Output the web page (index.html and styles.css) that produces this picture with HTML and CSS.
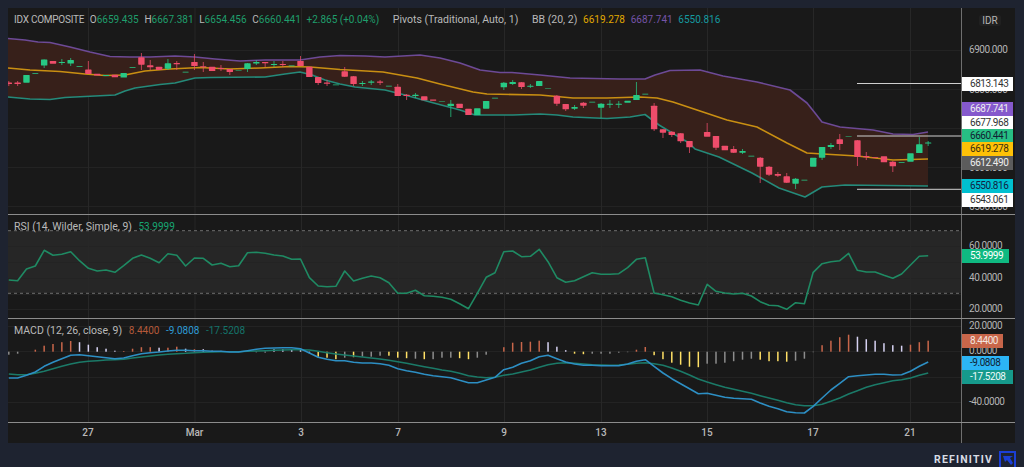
FILE: index.html
```html
<!DOCTYPE html>
<html lang="en">
<head>
    <meta charset="UTF-8">
    <meta name="viewport" content="width=device-width, initial-scale=1.0">
    <title>IDX Composite</title>
    <link rel="stylesheet" href="styles.css">
</head>
<body>
    <div class="chart">
        <!-- Price pane -->
        <div class="pane pane-price">
            <div class="plot">
                <svg id="pricePlot" viewBox="8 8 953 206" width="953" height="206"></svg>
                <div class="legend legend-price">
                    <span class="symbol">IDX COMPOSITE</span>
                    <span>O<b class="up">6659.435</b></span>
                    <span>H<b class="up">6667.381</b></span>
                    <span>L<b class="up">6654.456</b></span>
                    <span>C<b class="up">6660.441</b></span>
                    <span class="up">+2.865 (+0.04%)</span>
                    <span class="study name">Pivots (Traditional, Auto, 1)</span>
                    <span class="study name">BB (20, 2)</span>
                    <span class="bb-mid">6619.278</span>
                    <span class="bb-top">6687.741</span>
                    <span class="bb-low">6550.816</span>
                </div>
            </div>
            <div class="axis">
                <div class="currency">IDR</div>
                <span class="scale" style="top:41.5px">6900.000</span>
                <span class="scale" style="top:81.5px">6800.000</span>
                <span class="scale" style="top:159.5px">6600.000</span>
                <span class="scale" style="top:198.5px">6500.000</span>
                <span class="tag tag-white" style="top:75.5px">6813.143</span>
                <span class="tag tag-purple" style="top:100.7px">6687.741</span>
                <span class="tag tag-white" style="top:114.5px">6677.968</span>
                <span class="tag tag-green" style="top:128px">6660.441</span>
                <span class="tag tag-yellow" style="top:141.3px">6619.278</span>
                <span class="tag tag-grey" style="top:154.7px">6612.490</span>
                <span class="tag tag-cyan" style="top:178px">6550.816</span>
                <span class="tag tag-white" style="top:192px">6543.061</span>
            </div>
        </div>

        <!-- RSI pane -->
        <div class="pane pane-study">
            <div class="plot">
                <svg id="rsiPlot" viewBox="8 215 953 103" width="953" height="103"></svg>
                <div class="legend">
                    <span class="name">RSI (14, Wilder, Simple, 9)</span>
                    <span class="rsi-value">53.9999</span>
                </div>
            </div>
            <div class="axis">
                <span class="scale" style="top:31px">60.0000</span>
                <span class="scale" style="top:62.7px">40.0000</span>
                <span class="scale" style="top:94.3px">20.0000</span>
                <span class="tag tag-short tag-rsi" style="top:40.5px">53.9999</span>
            </div>
        </div>

        <!-- MACD pane -->
        <div class="pane pane-study">
            <div class="plot">
                <svg id="macdPlot" viewBox="8 319 953 103" width="953" height="103"></svg>
                <div class="legend">
                    <span class="name">MACD (12, 26, close, 9)</span>
                    <span class="macd-hist">8.4400</span>
                    <span class="macd-line">-9.0808</span>
                    <span class="macd-signal">-17.5208</span>
                </div>
            </div>
            <div class="axis">
                <span class="scale" style="top:7.3px">20.0000</span>
                <span class="scale" style="top:32.3px">0.0000</span>
                <span class="scale" style="top:83px">-40.0000</span>
                <span class="tag tag-hist" style="top:22px">8.4400</span>
                <span class="tag tag-short tag-macd" style="top:43.7px">-9.0808</span>
                <span class="tag tag-signal" style="top:57.5px">-17.5208</span>
            </div>
        </div>

        <!-- Time axis -->
        <div class="time-row">
            <div class="times">
                <span style="left:80px">27</span>
                <span style="left:186.5px">Mar</span>
                <span style="left:293px">3</span>
                <span style="left:390px">7</span>
                <span style="left:496px">9</span>
                <span style="left:593px">13</span>
                <span style="left:699px">15</span>
                <span style="left:805px">17</span>
                <span style="left:902px">21</span>
            </div>
            <div class="axis"></div>
        </div>
    </div>

    <div class="footer">
        <span class="brand">REFINITIV</span>
        <svg class="brand-logo" viewBox="0 0 17 16" width="17" height="16">
            <path d="M1 16V1h15v15" fill="none" stroke="#1b3fd6" stroke-width="2"/>
            <path d="M4 5h10L11 7l3 5-2 2-4-5-2 2z" fill="#1b3fd6"/>
        </svg>
    </div>

    <script src="chart.js"></script>
</body>
</html>
```

FILE: styles.css
```css
* {
    box-sizing: border-box;
}
body {
    margin: 0;
    padding: 8px 8px 0 8px;
    height: 467px;
    overflow: hidden;
    background: #1e2330;
    font-family: Roboto, "Liberation Sans", sans-serif;
    font-size: 10px;
}
.chart {
    width: 1007px;
    height: 435px;
    background: #191919;
}
.pane {
    display: flex;
    border-bottom: 1px solid #8c8c8c;
}
.pane-price {
    height: 207px;
}
.pane-study {
    height: 104px;
}
.plot {
    position: relative;
    width: 953px;
    flex: none;
}
.plot svg {
    display: block;
    filter: blur(0.35px);
}
.axis {
    position: relative;
    flex: 1;
    border-left: 1px solid #6f6f6f;
    color: #b4b4b4;
}
.legend {
    position: absolute;
    left: 6px;
    top: 6px;
    display: flex;
    gap: 6.5px;
    line-height: 12px;
    color: #b9b9b9;
    white-space: nowrap;
}
.legend-price {
    gap: 5.7px;
}
.legend b {
    font-weight: normal;
}
.symbol {
    letter-spacing: -0.25px;
}
.name {
    font-size: 10.5px;
}
.study {
    margin-left: 8px;
}
.up {
    color: #1f9e6c;
}
.bb-mid {
    color: #e0a800;
}
.bb-top {
    color: #7554a8;
}
.bb-low {
    color: #159aa0;
}
.rsi-value {
    color: #17a673;
}
.macd-hist {
    color: #b5593a;
}
.macd-line {
    color: #2e9bd6;
}
.macd-signal {
    color: #14746a;
}
.currency {
    width: 22px;
    margin: 7px 0 0 17px;
    line-height: 11px;
    text-align: center;
    background: #202020;
    border-radius: 2px;
}
.scale {
    position: absolute;
    left: 7px;
    line-height: 12px;
    letter-spacing: -0.45px;
    transform: translateY(-50%);
}
.tag {
    position: absolute;
    left: 0;
    width: 51px;
    height: 14px;
    padding-left: 8px;
    line-height: 14px;
    letter-spacing: -0.45px;
    transform: translateY(-50%);
}
.tag-short {
    width: 47px;
}
.tag-white {
    background: #fff;
    color: #333;
}
.tag-purple {
    background: #8559cc;
    color: #eee;
}
.tag-green {
    background: #27bf84;
    color: #123;
}
.tag-yellow {
    background: #ffc107;
    color: #3a2f10;
}
.tag-grey {
    background: #5c5c5c;
    color: #eee;
}
.tag-cyan {
    background: #00c0d0;
    color: #124;
}
.tag-rsi {
    background: #0fb981;
    color: #fff;
}
.tag-hist {
    width: 41px;
    background: #c8664a;
    color: #f3e6e0;
}
.tag-macd {
    background: #2cb5f5;
    color: #123;
}
.tag-signal {
    background: #169a8c;
    color: #eafafa;
}
.time-row {
    display: flex;
    height: 20px;
}
.times {
    position: relative;
    width: 953px;
    flex: none;
    color: #b9b9b9;
    font-weight: 500;
    line-height: 20px;
}
.times span {
    position: absolute;
    transform: translateX(-50%);
}
.footer {
    display: flex;
    justify-content: flex-end;
    align-items: flex-end;
    gap: 6px;
    height: 24px;
}
.brand {
    margin-bottom: 1px;
    color: #d8dce4;
    font-size: 10.5px;
    font-weight: 700;
    letter-spacing: 1.2px;
    line-height: 12px;
}
.brand-logo {
    display: block;
}
```

FILE: chart.js
```js
// x of bar i on the plot, all y values below are page pixels
const barX = i => 8.8 + 8.84 * i;
const ticks = [88, 194.5, 301, 398, 504, 601, 707, 813, 910];

const GREEN = '#27c985';
const RED = '#ef4d6b';

// dir, body top, body bottom, wick top, wick bottom (null = no bar)
const candles = [
    ['r',82.5,84,81,86],['r',82.5,84,81,86],['g',75,82.7],['g',73.2,74],['g',59.5,65.5,59.5,68],
    ['r',61,63.7],['g',62,63,59,65],['g',60,63.5,58,66],['g',66.3,67],['r',69.5,74,61,74],
    ['r',73.7,75.5],['g',75,76],['r',74.7,77.3],['g',73,77.5],['g',67.2,68],
    ['r',57.3,64.7,53,70],['r',65.3,67.3,60,70],['r',66.7,70],['g',63.3,68.7,59,70],['r',63,64.3,61,70],
    ['g',71.7,72.4],['r',62,66,54,70],['r',66.3,67.3,62,72],['r',66.7,71],['r',68,69,65,71],
    ['r',69,72,69,75],['g',70.4,71.1],['g',63.3,69,63,72],['g',62,63.5,60,65],['r',62,63.3,62,67],
    ['g',64,65,61,67],['r',64,65,61,67],['g',65.6,66.3],['r',61,66,56,66],['r',66.7,77],
    ['r',77,83,77,85],['r',82.5,83.8,80,86],['g',84.6,85.3],['r',71.3,76.7,67,77],['r',76.3,84,76,86],
    ['g',83,84,81,86],['g',81.5,82.7,80,85],['r',81.5,82.7,80,85],['g',85.7,86.4],['r',86.7,96,84,96],
    ['r',94.7,96,94,100],['g',94.7,96,93,98],['r',96.3,100.3],['r',99.5,100.7],['g',101.4,102.1],
    ['g',103.7,106,100,117],['r',103.7,108],['r',108.7,115],['g',108.3,115],['g',101,108.7],
    ['g',97.7,98.4],['g',82.7,87.3,82,90],['g',82,84,80,85],['r',82.3,87,82,89],['g',85.7,86.7,84,88],
    ['g',81,86],['g',88.4,89.1],['r',95.7,103.7,95,106],['r',104,109.3,104,111],['g',107,108.7,105,110],
    ['r',102.7,105.7,102,108],['g',101.7,102.4],['g',103.7,107.7,103,118],['g',103.7,104.7,100,108],['g',103.7,104.7,101,108],
    ['g',100.7,102.7],['g',95,100,82,100],['g',93.7,94.4],['r',105.7,129.3,103,131],['r',129.3,132.7,129,138],
    ['r',131.7,135,131,137],['r',133.3,141.3,133,143],['r',141,147.3,141,153],null,['r',132,136.7,123,136],
    ['r',136,147.7,136,150],['r',145.7,150.3],['r',149,152.7,146,153],['g',151,152.7,149,154],['g',155.7,156.4],
    ['r',157.7,166.7,157,183],['r',166.7,174.7,166,176],['r',174,175.7,172,177],['r',176.3,182.7,173,183],['g',178.7,183.7,178,189],
    ['g',179.7,180.4],['g',157.7,166.7],['g',147,157.7,147,160],['g',145,147,143,149],['r',139.3,144,134,150],
    ['g',136.4,137.1],['r',140.3,157,140,166],['r',156,157.3,152,160],['r',157.2,157.9],['r',156.3,162.3],
    ['r',161.7,166.3,161,172],['g',162,162.7],['g',153.3,161.7],['g',144.3,153,137,153],['g',142.5,143.5,141,146]
];

const bbTop = [[8,38.5],[25,40],[38,42],[50,42.5],[70,47],[90,52],[110,56.5],[130,57],[150,57],[175,56],[195,57],[215,59],[240,61],[265,60],[300,60],[320,57],[340,55.5],[365,56],[385,57],[420,55],[440,58],[460,63],[480,70],[500,72.5],[512,72.5],[540,75],[570,78],[620,79],[645,79],[655,75],[670,70.5],[700,70],[723,76],[757,82],[790,90],[807,103],[815,113],[822,122],[840,127],[873,130],[893,134],[913,134.5],[928,132]];
const bbMid = [[8,68],[30,70],[60,71.5],[85,74],[105,75.5],[125,75],[145,71],[170,69],[200,67.5],[230,69],[260,68],[290,66.5],[310,67],[340,69.5],[383,72],[417,78],[440,84],[473,92],[487,94],[540,95],[573,98],[607,98],[640,97],[657,98],[673,102],[697,110],[727,120],[757,127],[787,143],[807,153],[823,154],[857,156],[893,160],[928,159]];
const bbLow = [[8,97],[30,99],[50,99.5],[65,97.5],[115,95],[125,91],[135,88],[160,84.5],[175,83],[195,78],[210,77.5],[265,77],[285,74],[300,72],[312,75],[325,80],[340,84],[355,87],[385,90],[405,95],[430,102],[460,110],[475,115],[513,115],[540,114],[557,115],[573,117],[607,118.5],[630,117],[645,114.5],[659,125],[689,143],[695,149],[719,157],[752,173],[779,188],[805,197],[822,187],[845,185],[928,186]];

// sampled from the 3x crops, so y = pane top + v / 3
const rsi = [195,197,162,153,106,121,118,110,137,160,168,165,172,152,130,120,130,143,116,121,153,129,130,150,145,155,152,113,112,115,120,123,133,132,188,213,215,214,168,198,190,183,188,203,235,235,226,242,244,247,253,266,281,235,187,173,110,
    108,125,124,103,140,188,202,197,185,173,178,178,176,158,133,128,234,239,245,256,264,270,208,229,234,237,235,243,260,271,272,283,263,266,172,146,140,137,115,166,171,171,181,190,177,150,124,122];
const macd = [180,180,172,162,145,133,122,112,110,113,116,119,122,120,113,107,104,102,99,97,97,98,98,100,100,102,102,98,94,91,90,89,89,92,105,118,124,128,128,133,135,135,137,142,152,158,163,169,173,176,179,187,194,194,186,178,155,
    148,136,128,116,112,122,132,138,142,142,143,143,143,138,130,125,145,165,182,197,212,227,226,232,238,241,242,244,255,265,272,281,284,285,265,240,216,196,176,173,171,169,169,171,170,160,145,132];
const signal = [168,170,170,166,160,152,145,138,133,130,128,126,125,124,120,117,114,111,109,107,106,104,103,102,101,101,101,100,99,98,97,96,95,95,96,100,104,108,111,114,117,120,123,127,131,136,141,146,151,156,160,166,173,177,179,178,172,
    168,162,156,148,140,136,134,136,138,140,141,142,141,139,136,134,137,142,150,160,171,183,192,200,208,214,220,226,233,240,247,254,260,263,263,259,250,240,228,218,208,200,194,188,185,180,172,165];

// histogram height above (+) or below (-) the zero line, and its colour key per bar
const hist = [-3,-2,0,2,6,7.7,9.5,10.7,9.5,7,4.5,3,1,0.7,3,4.5,4.5,4,4,5,3,2.5,2.5,1,0.8,0.5,0,0,-0.5,-0.7,2.5,2.5,2.5,2.5,-1.5,-5,-6,-7.5,-6,-5.5,-5,-5,-4,-4,-6,-6.5,-7,-7.5,-7.5,-6,-6,-6.5,-7.5,-6,-3,0,4.5,
    9,9.7,10,11,9.5,5,1.5,-2,-2.5,-2,-2,-2,-1,-0.5,2,4.7,-3.5,-7.5,-11,-13,-15,-15.5,-12,-12,-11,-9.5,-8,-7,-8,-9.5,-9.5,-10,-9,-7,-0.5,6.5,11,14.5,17,15,12.5,11,8.5,6.5,6,7,9.5,11];
const histKeys = 'ggoooooowwwwwoooowoowo' + 'wwwwwwwwwwwww' + 'yyygyggg' + 'yyygyggg' + 'yygggo'
    + 'oooowwwyyggggg' + 'ooyyyyyygggggg' + 'yyyyggg' + 'oooowwwwwwooo';
const histColors = { o: '#c8664a', w: '#d6d2f2', y: '#ffe066', g: '#8c8c8c' };

const line = (pts, color, width = 1.6) =>
    `<polyline points="${pts.map(p => p.join(',')).join(' ')}" fill="none" stroke="${color}" stroke-width="${width}" stroke-linejoin="round"/>`;

const rect = (x, y, w, h, fill, extra = '') =>
    `<rect x="${x}" y="${y}" width="${w}" height="${h}" fill="${fill}" ${extra}/>`;

function grid(rows, top, bottom) {
    let out = '';
    rows.forEach(y => { out += rect(8, y, 953, 1, '#232323'); });
    ticks.forEach(x => { out += rect(x, top, 1, bottom - top, '#272727'); });
    return out;
}

function series(values, top) {
    return values.map((v, i) => [barX(i).toFixed(1), (top + v / 3).toFixed(1)]);
}

function drawPrice() {
    let out = grid([50, 89, 128, 167, 206], 8, 214);

    // Bollinger band fill, then candles on top of it
    const band = bbTop.concat(bbLow.slice().reverse()).map(p => p.join(',')).join(' ');
    out += `<polygon points="${band}" fill="#37201a"/>`;
    out += line(bbTop, '#6d4a96');
    out += line(bbLow, '#258a7a');
    out += line(bbMid, '#c98f12');

    candles.forEach((c, i) => {
        if (!c) return;
        const color = c[0] === 'g' ? GREEN : RED;
        const x = barX(i);
        if (c[3] !== undefined) out += rect(x - 0.5, c[3], 1, c[4] - c[3], color, 'opacity="0.75"');
        out += rect(x - 3.2, c[1], 6.4, c[2] - c[1], color, 'rx="0.6"');
    });

    // pivot rays
    [83.5, 136, 189.3].forEach(y => { out += rect(857, y - 0.5, 104, 1, '#d0d0d0'); });
    document.getElementById('pricePlot').innerHTML = out;
}

function drawRsi() {
    let out = rect(8, 231, 953, 62, '#262626');
    out += grid([246, 262, 278, 294, 309], 215, 318);
    out += `<line x1="8" x2="961" y1="230.7" y2="230.7" stroke="#6e6e6e" stroke-dasharray="3 3"/>`;
    out += `<line x1="8" x2="961" y1="293.3" y2="293.3" stroke="#6e6e6e" stroke-dasharray="3 3"/>`;
    out += line(series(rsi, 215), '#1f8a63');
    document.getElementById('rsiPlot').innerHTML = out;
}

function drawMacd() {
    let out = grid([326, 351, 377, 402], 319, 422);
    const zero = 351.7;
    hist.forEach((h, i) => {
        if (!h) return;
        const y = h > 0 ? zero - h : zero;
        out += rect(barX(i) - 0.75, y, 1.5, Math.abs(h), histColors[histKeys[i]]);
    });
    out += line(series(signal, 318), '#1b7a68');
    out += line(series(macd, 318), '#2d8fc4');
    document.getElementById('macdPlot').innerHTML = out;
}

drawPrice();
drawRsi();
drawMacd();
```
